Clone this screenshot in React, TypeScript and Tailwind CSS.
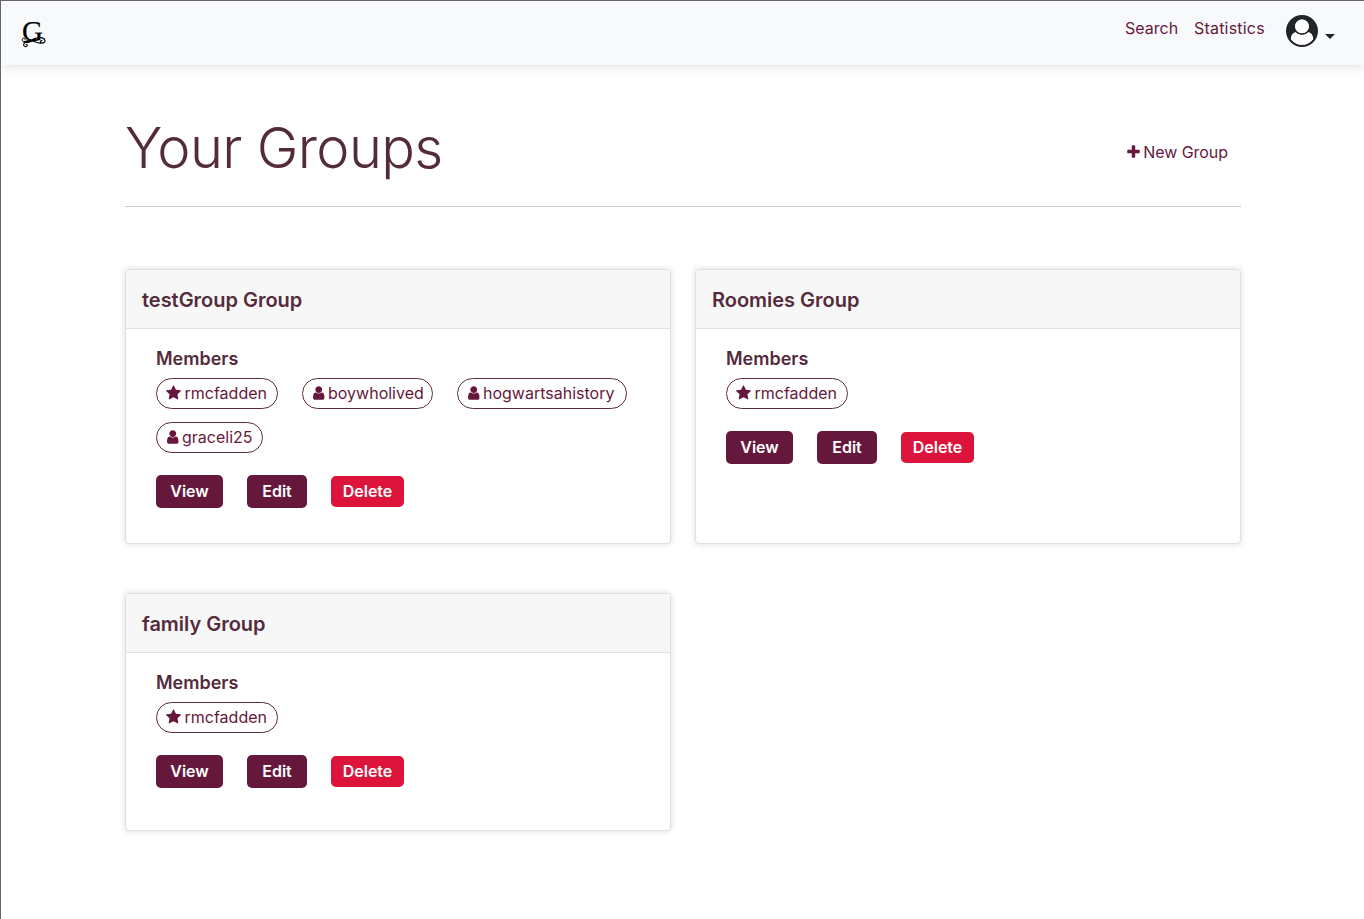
import React from "react";

const GROUPS = [
  { name: "testGroup", height: "h-[275px]", members: ["rmcfadden", "boywholived", "hogwartsahistory", "graceli25"] },
  { name: "Roomies", height: "h-[275px]", members: ["rmcfadden"] },
  { name: "family", height: "h-[238px]", members: ["rmcfadden"] },
];

const PILL_WIDTHS: Record<string, string> = {
  rmcfadden: "w-[122px]",
  boywholived: "w-[131px]",
  hogwartsahistory: "w-[170px]",
  graceli25: "w-[107px]",
};

function Logo() {
  return (
    <svg viewBox="0 0 26 30" className="mt-[18px] h-[30px] w-[26px] overflow-visible" fill="none" stroke="#000" strokeLinecap="round">
      <text x="0.9" y="21.8" fontSize="28.5" textLength="21" lengthAdjust="spacingAndGlyphs" fill="#000" stroke="#000" strokeWidth="0.25" className="font-['Liberation_Serif',serif]">G</text>
      <path d="M6.5 23.5C3.5 24 1 22.5 1.3 20.5C1.6 18.4 4.5 18.7 4.3 20.8" strokeWidth="1" />
      <path d="M3 22.5C9 24.5 14 17.5 20 18.6C25.5 19.6 24.8 24.5 21 24C18.5 23.6 19 21.5 20.8 21.7" strokeWidth="1.2" />
      <path d="M20.5 24C15 24.8 12 20.6 7 21.7C1.5 23 2 27.8 4.5 27.8C6.8 27.8 6.7 25.2 4.9 25.5" strokeWidth="1.1" />
      <path d="M5 22.8C9 23.5 11 21 14.5 19.8" strokeWidth="2" />
    </svg>
  );
}

function Star() {
  return (
    <svg viewBox="64 0 1664 1792" className="h-4 w-[15px] shrink-0" fill="currentColor">
      <path d="M1728 647q0 22-26 48l-363 354 86 500q1 7 1 20 0 21-10.5 35.5t-30.5 14.5q-19 0-40-12l-449-236-449 236q-22 12-40 12-21 0-31.5-14.5t-10.5-35.5q0-6 2-20l86-500-364-354q-25-27-25-48 0-37 56-46l502-73 225-455q19-41 49-41t49 41l225 455 502 73q56 9 56 46z" />
    </svg>
  );
}

function Person() {
  return (
    <svg viewBox="256 0 1280 1792" className="ml-px h-4 w-[11.5px] shrink-0" fill="currentColor">
      <path d="M1536 1399q0 109-62.5 187t-150.5 78h-854q-88 0-150.5-78t-62.5-187q0-85 8.5-160.5t31.5-152 58.5-131 94-89 134.5-34.5q131 128 313 128t313-128q76 0 134.5 34.5t94 89 58.5 131 31.5 152 8.5 160.5zm-256-887q0 159-112.5 271.5t-271.5 112.5-271.5-112.5-112.5-271.5 112.5-271.5 271.5-112.5 271.5 112.5 112.5 271.5z" />
    </svg>
  );
}

function Plus() {
  return (
    <svg viewBox="192 0 1408 1792" className="h-4 w-[13px]" fill="currentColor">
      <path d="M1600 736v192q0 40-28 68t-68 28h-416v416q0 40-28 68t-68 28h-192q-40 0-68-28t-28-68v-416h-416q-40 0-68-28t-28-68v-192q0-40 28-68t68-28h416v-416q0-40 28-68t68-28h192q40 0 68 28t28 68v416h416q40 0 68 28t28 68z" />
    </svg>
  );
}

function Avatar() {
  return (
    <svg viewBox="0 0 1792 1792" className="mt-3.5 size-8" fill="#212529">
      <path d="M1523 1339q-22-155-87.5-257.5t-184.5-118.5q-67 74-159.5 115.5t-195.5 41.5-195.5-41.5-159.5-115.5q-119 16-184.5 118.5t-87.5 257.5q106 150 271 237.5t356 87.5 356-87.5 271-237.5zm-243-699q0-159-112.5-271.5t-271.5-112.5-271.5 112.5-112.5 271.5 112.5 271.5 271.5 112.5 271.5-112.5 112.5-271.5zm512 256q0 182-71 347.5t-190.5 286-285.5 191.5-349 71q-182 0-348-71t-286-191-191-286-71-348 71-348 191-286 286-191 348-71 348 71 286 191 191 286 71 348z" />
      <path fill="#fff" d="M1523 1339q-22-155-87.5-257.5t-184.5-118.5q-67 74-159.5 115.5t-195.5 41.5-195.5-41.5-159.5-115.5q-119 16-184.5 118.5t-87.5 257.5q106 150 271 237.5t356 87.5 356-87.5 271-237.5zm-243-699q0-159-112.5-271.5t-271.5-112.5-271.5 112.5-112.5 271.5 112.5 271.5 271.5 112.5 271.5-112.5 112.5-271.5z" />
    </svg>
  );
}

function Card({ name, height, members }: { name: string; height: string; members: string[] }) {
  return (
    <section className={`${height} overflow-hidden rounded border border-[#dfdfdf] bg-white shadow-[0_0_6px_rgba(0,0,0,0.14)]`}>
      <h2 className="flex h-[59px] items-center border-b border-[#dfdfdf] bg-[#f7f7f7] px-4 pt-0.5 text-[20px] font-semibold tracking-[-0.02px]">
        {name} Group
      </h2>
      <div className="px-[30px] pt-[18px]">
        <h3 className="h-[31px] text-[18px] leading-6 font-semibold">Members</h3>
        <ul className="flex flex-wrap gap-x-6 gap-y-[13px] text-[#66183c]">
          {members.map((m) => (
            <li key={m} className={`${PILL_WIDTHS[m]} flex h-[31px] items-center gap-[3.5px] rounded-full border border-[#592d3d] pb-px pl-[9px]`}>
              {m === "rmcfadden" ? <Star /> : <Person />}
              <span>{m}</span>
            </li>
          ))}
        </ul>
        <div className="mt-[22px] flex items-center gap-6 font-semibold text-white">
          <button className="h-[33px] w-[67px] rounded-[5px] bg-[#66183c] pb-0.5">View</button>
          <button className="h-[33px] w-[60px] rounded-[5px] bg-[#66183c] pb-0.5">Edit</button>
          <button className="h-[31px] w-[73px] rounded-[5px] bg-[#dc143c] pb-0.5">Delete</button>
        </div>
      </div>
    </section>
  );
}

export default function App() {
  return (
    <div className="h-[919px] overflow-hidden border-t border-l border-[#66666a] bg-white font-['Inter',sans-serif] text-[16px] text-[#542b3c]">
      <nav className="flex h-16 justify-between bg-[#f8f9fb] pr-[29px] pl-5 shadow-[0_2px_10px_rgba(0,0,0,0.12)]">
        <Logo />
        <div className="flex text-[#66183c]">
          <a className="mr-4 w-[53px] pt-[15px]">Search</a>
          <a className="mr-5 w-[72px] pt-[15px] tracking-[0.2px]">Statistics</a>
          <Avatar />
          <svg viewBox="0 0 10 5" className="mt-[33px] ml-[7px] h-[5px] w-2.5" fill="#212529"><path d="M0 0h10L5 5z" /></svg>
        </div>
      </nav>
      <main className="ml-[124px] w-[1116px]">
        <header className="flex h-[142px] justify-between border-b border-[#cfc7cb]">
          <h1 className="pt-[47px] text-[56px] leading-[72px] font-light tracking-[-0.65px]">Your Groups</h1>
          <a className="mt-[75px] mr-[13px] flex h-6 items-center gap-[3.5px] tracking-[-0.05px] text-[#66183c]"><Plus />New Group</a>
        </header>
        <div className="mt-[62px] grid grid-cols-2 gap-x-6 gap-y-[49px]">
          {GROUPS.map((g) => <Card key={g.name} {...g} />)}
        </div>
      </main>
    </div>
  );
}
